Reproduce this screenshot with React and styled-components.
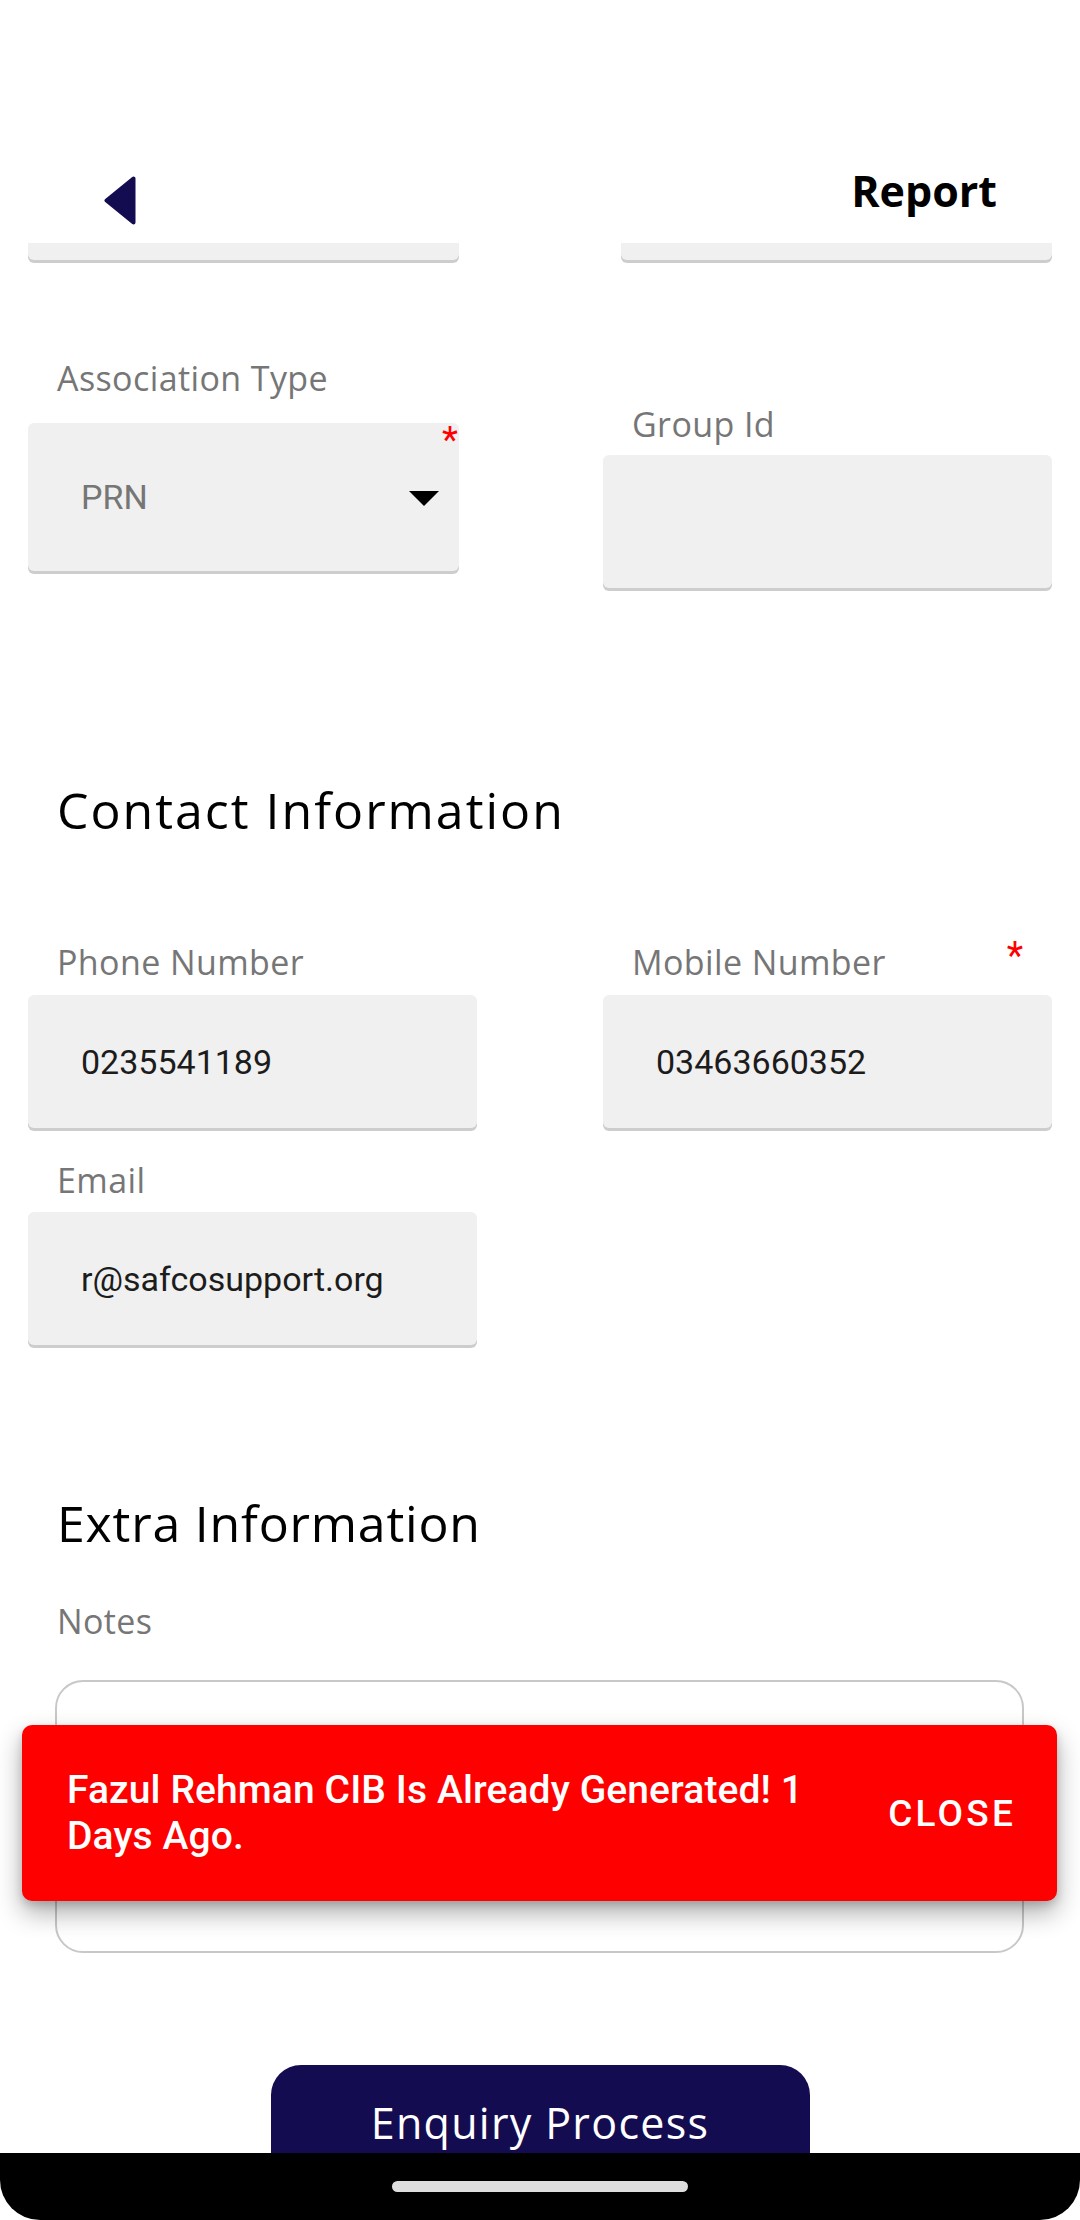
import React from "react";
import styled, { createGlobalStyle } from "styled-components";

const GlobalStyle = createGlobalStyle`
  html, body {
    margin: 0;
    padding: 0;
    background: #ffffff;
  }
  body {
    font-family: "Open Sans", "Liberation Sans", sans-serif;
  }
  * { box-sizing: border-box; }
`;

const Screen = styled.div`
  position: relative;
  width: 1080px;
  height: 2220px;
  overflow: hidden;
  display: flex;
  flex-direction: column;
  background: #ffffff;
`;

const Header = styled.header`
  flex-shrink: 0;
  height: 243px;
  padding: 165px 83px 0 104px;
  display: flex;
  justify-content: space-between;
  align-items: flex-start;
  background: #ffffff;
  position: relative;
  z-index: 2;
`;

const BackButton = styled.button`
  margin-top: 11px;
  padding: 0;
  border: 0;
  background: transparent;
  width: 32px;
  height: 49px;
  display: block;
`;

const Title = styled.h1`
  margin: 0;
  font-family: "Open Sans", sans-serif;
  font-weight: 700;
  font-size: 43px;
  line-height: 52px;
  color: #000000;
`;

const ScrollArea = styled.main`
  flex: 1;
  overflow: hidden;
  position: relative;
`;

const Content = styled.div`
  margin-top: -116px;
  padding: 0 28px;
  display: flex;
  flex-direction: column;
`;

const Row = styled.div`
  display: grid;
  grid-template-columns: 449px 449px;
  column-gap: 126px;
  align-items: start;
  margin-top: ${(p) => p.$top || 0}px;
`;

const FieldGroup = styled.div`
  position: relative;
  display: flex;
  flex-direction: column;
  align-items: ${(p) => (p.$end ? "flex-end" : "flex-start")};
  margin-top: ${(p) => p.$offset || 0}px;
`;

const Label = styled.label`
  display: block;
  padding-left: 29px;
  margin-bottom: ${(p) => (p.$gap != null ? p.$gap : 12)}px;
  font-family: "Open Sans", sans-serif;
  font-size: 34px;
  line-height: 40px;
  letter-spacing: 0.4px;
  color: #767676;
`;

const Field = styled.div`
  position: relative;
  width: ${(p) => p.$w || 449}px;
  height: ${(p) => p.$h || 133}px;
  padding-left: 53px;
  display: flex;
  align-items: center;
  background: #f0f0f0;
  border-radius: 6px;
  box-shadow: 0 3px 0 #cdcdcd;
  font-family: Roboto, "Liberation Sans", sans-serif;
  font-size: 34px;
  color: ${(p) => (p.$muted ? "#767676" : "#1c1c1c")};
`;

const Caret = styled.span`
  position: absolute;
  right: 20px;
  top: 50%;
  margin-top: -6px;
  width: 0;
  height: 0;
  border-left: 15px solid transparent;
  border-right: 15px solid transparent;
  border-top: 15px solid #000000;
`;

const Required = styled.span`
  position: absolute;
  right: ${(p) => p.$right}px;
  top: ${(p) => p.$top}px;
  font-family: Roboto, "Liberation Sans", sans-serif;
  font-size: ${(p) => p.$size}px;
  line-height: 1;
  color: #ff0000;
`;

const SectionTitle = styled.h2`
  margin: ${(p) => p.$top}px 0 0 0;
  padding-left: 29px;
  font-family: "Open Sans", sans-serif;
  font-weight: 400;
  font-size: 50px;
  line-height: 60px;
  letter-spacing: ${(p) => p.$spacing}px;
  color: #000000;
`;

const NotesBlock = styled.div`
  margin-top: 48px;
  display: flex;
  flex-direction: column;
`;

const NotesBox = styled.div`
  margin: 39px 28px 0 27px;
  height: 273px;
  border: 2px solid #c8c8c8;
  border-radius: 28px;
  background: #ffffff;
`;

const PrimaryButton = styled.button`
  align-self: center;
  margin-top: 112px;
  width: 539px;
  height: 116px;
  border: 0;
  border-radius: 30px;
  background: #140c50;
  color: #ffffff;
  font-family: "Open Sans", sans-serif;
  font-size: 43px;
  line-height: 52px;
  letter-spacing: 1.3px;
  display: flex;
  align-items: center;
  justify-content: center;
  padding: 0;
`;

const Snackbar = styled.div`
  position: absolute;
  left: 22px;
  right: 23px;
  top: 1725px;
  height: 176px;
  padding: 0 41px 0 45px;
  display: flex;
  align-items: center;
  gap: 50px;
  background: #ff0000;
  border-radius: 10px;
  box-shadow: 0 12px 26px rgba(0, 0, 0, 0.32), 0 4px 8px rgba(0, 0, 0, 0.15);
  z-index: 3;
`;

const SnackText = styled.p`
  flex: 1;
  margin: 0;
  font-family: Roboto, "Liberation Sans", sans-serif;
  font-weight: 500;
  font-size: 39px;
  line-height: 46px;
  letter-spacing: 0.1px;
  color: #ffffff;
`;

const SnackAction = styled.button`
  padding: 0;
  border: 0;
  background: transparent;
  font-family: Roboto, "Liberation Sans", sans-serif;
  font-weight: 500;
  font-size: 37px;
  letter-spacing: 3.2px;
  color: #ffffff;
`;

const NavBar = styled.div`
  flex-shrink: 0;
  height: 67px;
  background: #000000;
  border-radius: 0 0 40px 40px;
  display: flex;
  justify-content: center;
  padding-top: 28px;
  position: relative;
  z-index: 4;
`;

const Handle = styled.div`
  width: 296px;
  height: 11px;
  border-radius: 6px;
  background: #dedede;
`;

function BackArrow() {
  return (
    <svg width="32" height="49" viewBox="0 0 32 49">
      <polygon
        points="29.5,2.5 29.5,46.5 2.5,24.5"
        fill="#140c50"
        stroke="#140c50"
        strokeWidth="4"
        strokeLinejoin="round"
      />
    </svg>
  );
}

export default function App() {
  return (
    <>
      <GlobalStyle />
      <Screen>
        <Header>
          <BackButton aria-label="Back">
            <BackArrow />
          </BackButton>
          <Title>Report</Title>
        </Header>

        <ScrollArea>
          <Content>
            <Row>
              <FieldGroup>
                <Field $w={431} />
              </FieldGroup>
              <FieldGroup $end>
                <Field $w={431} />
              </FieldGroup>
            </Row>

            <Row $top={98}>
              <FieldGroup>
                <Label $gap={25}>Association Type</Label>
                <Field $w={431} $h={148} $muted>
                  PRN
                  <Caret />
                  <Required $right={1} $top={-2} $size={37}>*</Required>
                </Field>
              </FieldGroup>
              <FieldGroup $offset={46}>
                <Label $gap={11}>Group Id</Label>
                <Field />
              </FieldGroup>
            </Row>

            <SectionTitle $top={192} $spacing={2}>Contact Information</SectionTitle>

            <Row $top={102}>
              <FieldGroup>
                <Label $gap={13}>Phone Number</Label>
                <Field>0235541189</Field>
              </FieldGroup>
              <FieldGroup>
                <Label $gap={13}>Mobile Number</Label>
                <Required $right={29} $top={-5} $size={38}>*</Required>
                <Field>03463660352</Field>
              </FieldGroup>
            </Row>

            <Row $top={32}>
              <FieldGroup>
                <Label>Email</Label>
                <Field>r@safcosupport.org</Field>
              </FieldGroup>
            </Row>

            <SectionTitle $top={148} $spacing={0.8}>Extra Information</SectionTitle>

            <NotesBlock>
              <Label $gap={0}>Notes</Label>
              <NotesBox />
            </NotesBlock>

            <PrimaryButton>Enquiry Process</PrimaryButton>
          </Content>
        </ScrollArea>

        <Snackbar>
          <SnackText>Fazul Rehman CIB Is Already Generated! 1 Days Ago.</SnackText>
          <SnackAction>CLOSE</SnackAction>
        </Snackbar>

        <NavBar>
          <Handle />
        </NavBar>
      </Screen>
    </>
  );
}
